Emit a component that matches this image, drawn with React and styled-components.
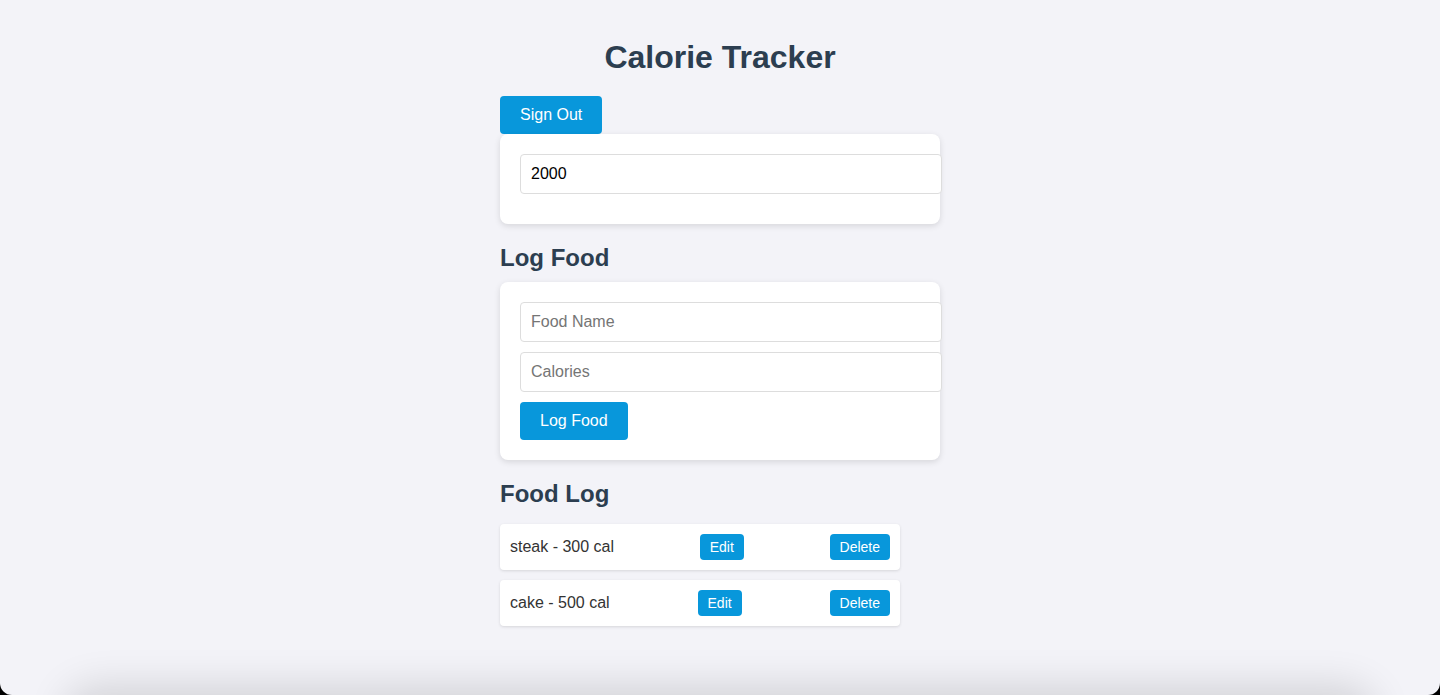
import React, { useState } from 'react'
import styled, { createGlobalStyle } from 'styled-components';

const GlobalStyle = createGlobalStyle`
html, body {
  margin: 0;
  padding: 0;
  background: #000;
  font-family: "Liberation Sans", Arial, sans-serif;
}
`;

const Page = styled.div`
position: relative;
min-height: 695px;
box-sizing: border-box;
background: #f3f3f8;
border-radius: 0 0 12px 12px;
overflow: hidden;
&::after {
  content: '';
  position: absolute;
  left: 65px;
  right: 65px;
  top: 100%;
  height: 60px;
  border-radius: 40px;
  box-shadow: 0 -8px 40px rgba(0, 0, 0, 0.14);
}
`;

const Container = styled.div`
width: 440px;
margin: 0 auto;
padding-top: 39px;
`;

const Title = styled.h1`
margin: 0 0 20px;
font-size: 32px;
font-weight: 700;
text-align: center;
color: #2c3e50;
`;

const Heading = styled.h2`
margin: 20px 0 ${p => p.$gap || 10}px;
font-size: 24px;
font-weight: 700;
color: #2c3e50;
`;

const Button = styled.button`
display: block;
padding: ${p => p.$small ? '5px 10px' : '10px 20px'};
font-family: inherit;
font-size: ${p => p.$small ? '14px' : '16px'};
color: #fff;
background: #0897db;
border: none;
border-radius: 4px;
cursor: pointer;
`;

const Card = styled.div`
padding: 20px;
background: #fff;
border-radius: 8px;
box-shadow: 0 2px 6px rgba(0, 0, 0, 0.12);
`;

const Input = styled.input`
display: block;
width: 100%;
margin: 0 0 10px;
padding: 10px;
font-family: inherit;
font-size: 16px;
color: #000;
border: 1px solid #ddd;
border-radius: 4px;
outline: none;
&::placeholder {
  color: #757575;
}
`;

const List = styled.ul`
display: flex;
flex-direction: column;
gap: 10px;
width: 400px;
margin: 0;
padding: 0;
list-style: none;
`;

const Item = styled.li`
display: flex;
justify-content: space-between;
align-items: center;
padding: 10px;
font-size: 16px;
color: #333;
background: #fff;
border-radius: 4px;
box-shadow: 0 1px 3px rgba(0, 0, 0, 0.12);
`;

const foods = [
    { name: 'steak', calories: 300 },
    { name: 'cake', calories: 500 },
];

const App = () => {
    const [goal, setGoal] = useState('2000');
    return (
        <Page>
            <GlobalStyle />
            <Container>
                <Title>Calorie Tracker</Title>
                <Button>Sign Out</Button>
                <Card>
                    <Input value={goal} onChange={e => setGoal(e.target.value)} />
                </Card>
                <Heading>Log Food</Heading>
                <Card>
                    <Input placeholder="Food Name" />
                    <Input placeholder="Calories" />
                    <Button>Log Food</Button>
                </Card>
                <Heading $gap={16}>Food Log</Heading>
                <List>
                    {foods.map(f => (
                        <Item key={f.name}>
                            <span>{f.name} - {f.calories} cal</span>
                            <Button $small>Edit</Button>
                            <Button $small>Delete</Button>
                        </Item>
                    ))}
                </List>
            </Container>
        </Page>
    )
}

export default App
